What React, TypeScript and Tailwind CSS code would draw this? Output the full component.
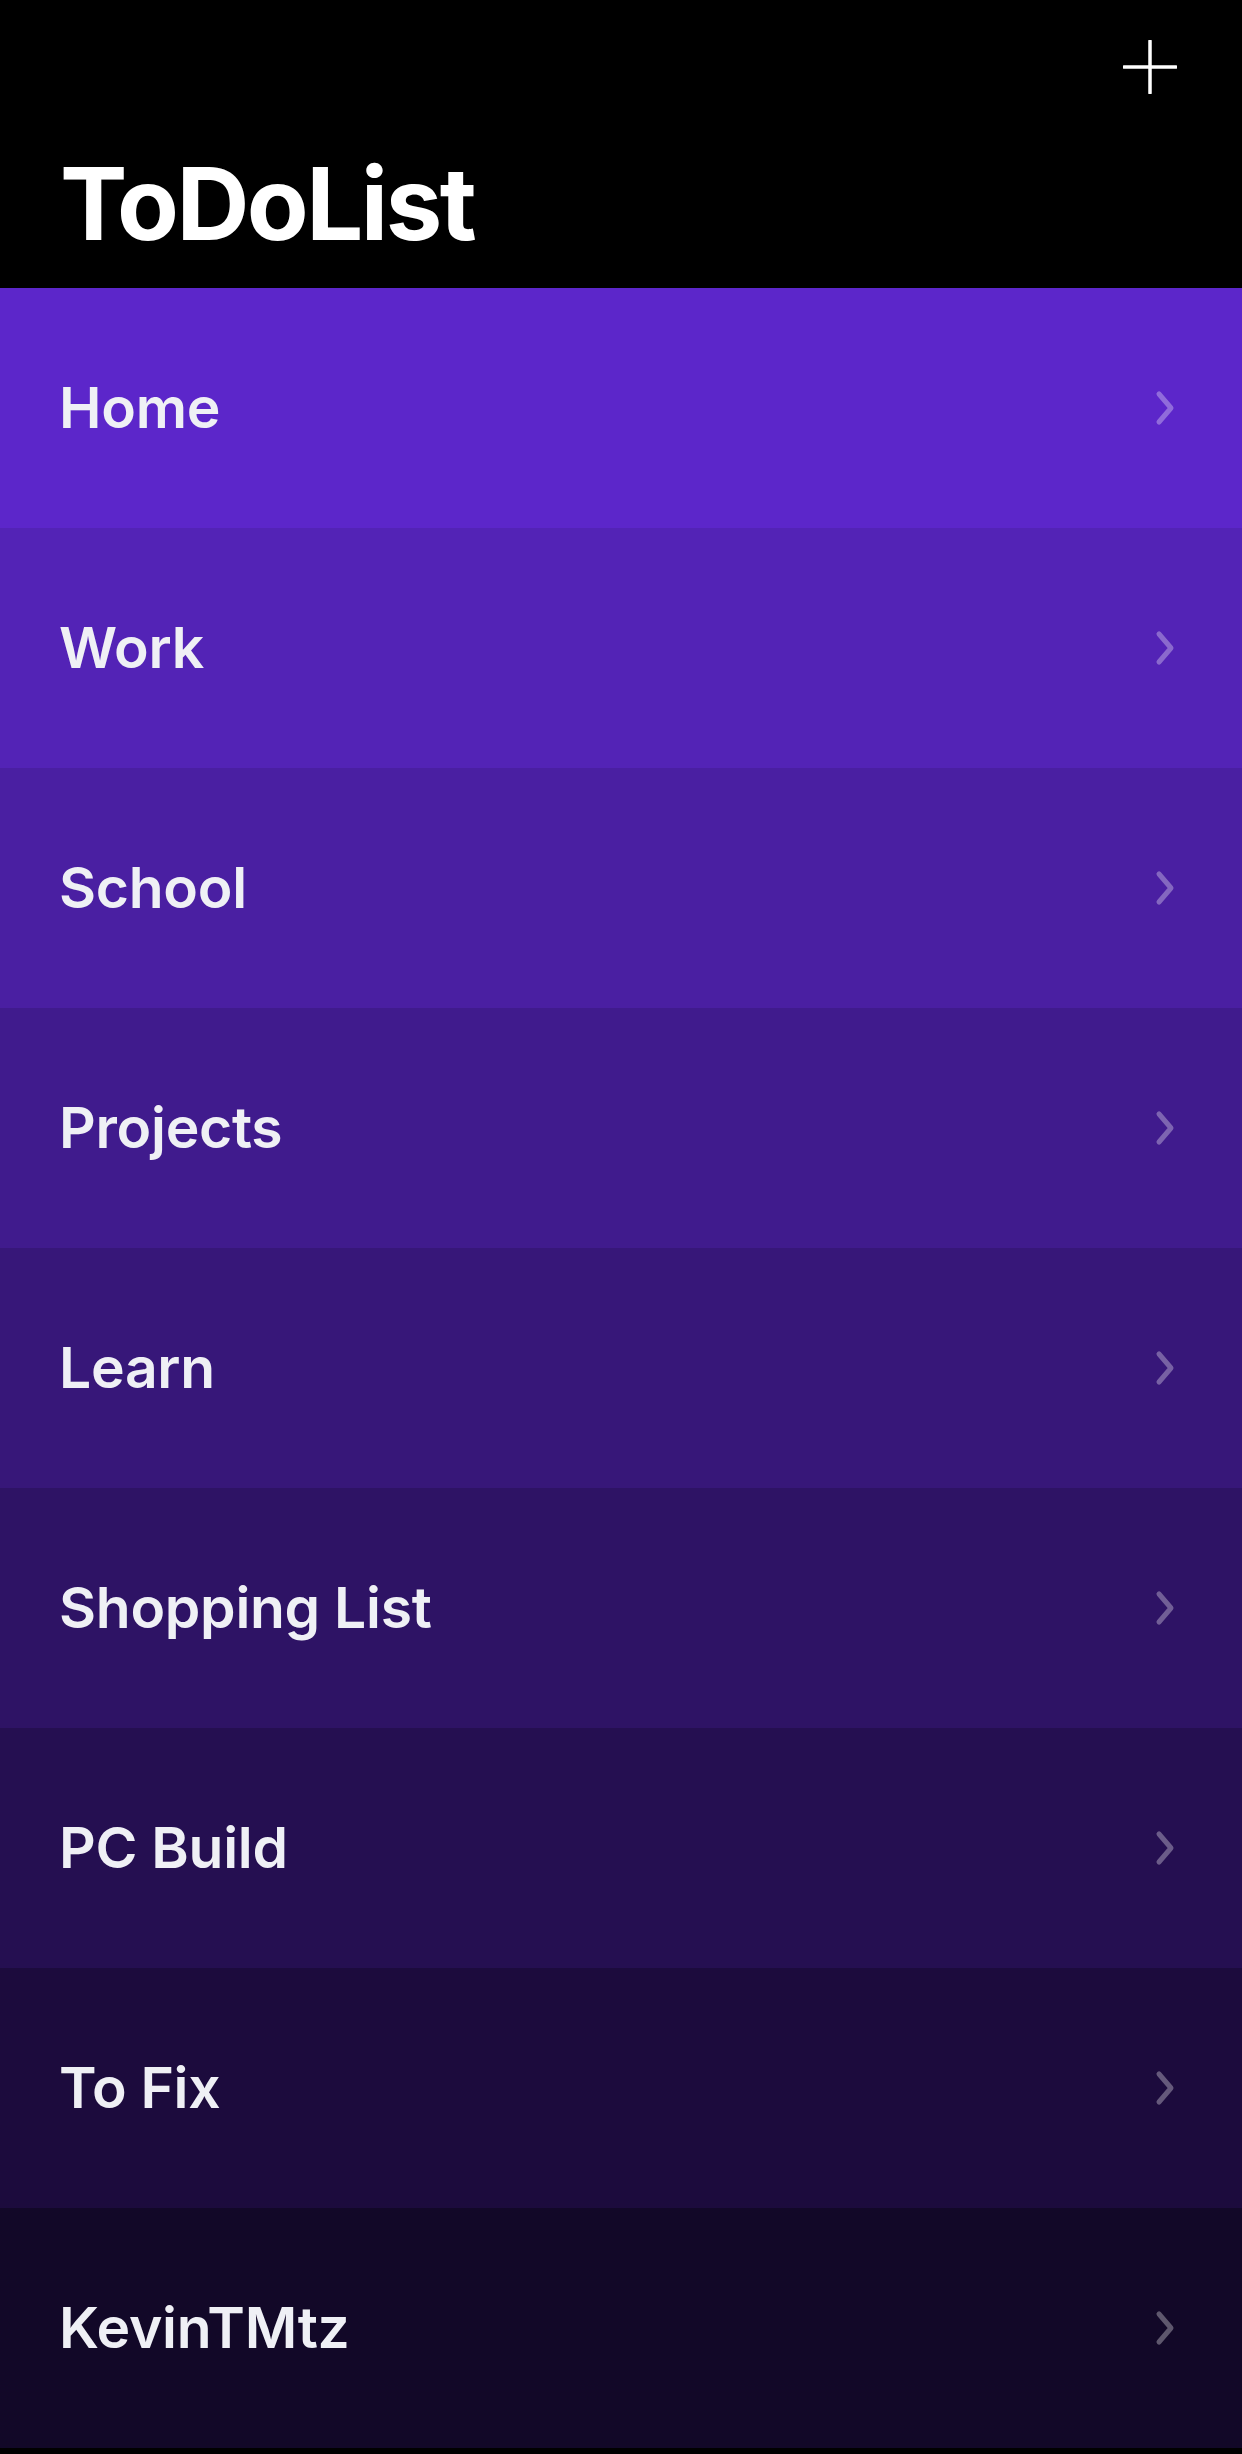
import React from "react";

const rows = [
  { name: "Home", bg: "bg-[#5c26ca]" },
  { name: "Work", bg: "bg-[#5323b6]" },
  { name: "School", bg: "bg-[#4a1fa2]" },
  { name: "Projects", bg: "bg-[#401b8d]" },
  { name: "Learn", bg: "bg-[#371779]" },
  { name: "Shopping List", bg: "bg-[#2e1365]" },
  { name: "PC Build", bg: "bg-[#250f51]" },
  { name: "To Fix", bg: "bg-[#1c0b3d]" },
  { name: "KevinTMtz", bg: "bg-[#120828]" },
];

function Chevron() {
  return (
    <svg width="30" height="42" viewBox="0 0 30 42" fill="none">
      <path
        d="M9 7 L21 21 L9 35"
        stroke="rgba(255,255,255,0.32)"
        strokeWidth="5"
        strokeLinecap="round"
        strokeLinejoin="round"
      />
    </svg>
  );
}

export default function App() {
  return (
    <div
      className="w-[1242px] h-[2454px] bg-black"
      style={{ fontFamily: "Inter, 'Noto Sans', sans-serif" }}
    >
      <header className="h-[288px] flex flex-col pl-[60px] pr-[62px]">
        <div className="flex justify-end pt-[40px] pr-[3px]">
          <svg width="54" height="54" viewBox="0 0 54 54" fill="none">
            <path
              d="M27 1 V53 M1 27 H53"
              stroke="white"
              strokeWidth="3.5"
              strokeLinecap="round"
            />
          </svg>
        </div>
        <h1 className="mt-[59px] text-[101px] leading-none font-bold text-white tracking-[-0.025em]">
          ToDoList
        </h1>
      </header>
      <div className="flex flex-col">
        {rows.map((r) => (
          <div
            key={r.name}
            className={`${r.bg} h-[240px] flex items-center justify-between pl-[59px] pr-[62px]`}
          >
            <span className="text-[57px] font-semibold text-[#eff0f5] tracking-[-0.005em]">
              {r.name}
            </span>
            <Chevron />
          </div>
        ))}
      </div>
    </div>
  );
}
